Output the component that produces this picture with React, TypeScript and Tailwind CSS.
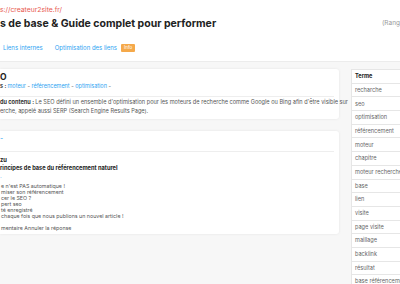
import React from 'react';

const terms = [
  'recharche',
  'seo',
  'optimisation',
  'référencement',
  'moteur',
  'chapitre',
  'moteur recherche',
  'base',
  'lien',
  'visite',
  'page visite',
  'maillage',
  'backlink',
  'résultat',
  'base référencement',
];

const listItems = [
  "e n'est PAS automatique !",
  'miser son référencement',
  'cer le SEO ?',
  'pert seo',
  'té enregistré',
  'chaque fois que nous publions un nouvel article !',
];

const App: React.FC = () => {
  return (
    <div className="w-[400px] h-[284px] overflow-hidden bg-[#f7f7f7] font-['Inter',sans-serif] text-[#555]">
      {/* Header */}
      <div className="h-[62px] bg-white border-b border-[#ececec] pt-[5px]">
        <div className="text-[6.8px] leading-[10px] text-[#e8594f]">s://createur2site.fr/</div>
        <div className="mt-[1px] flex items-center whitespace-nowrap">
          <div className="w-[382px] shrink-0 text-[10.5px] leading-[16px] font-bold text-[#222]">
            s de base &amp; Guide complet pour performer
          </div>
          <div className="text-[6.5px] text-[#999]">(Rang</div>
        </div>
        <div className="mt-[11px] flex items-center pl-[3px] text-[6px] leading-[10px] text-[#2ea3f2] whitespace-nowrap">
          <span>Liens internes</span>
          <span className="ml-[12px]">Optimisation des liens</span>
          <span className="ml-[4px] rounded-[1px] bg-[#f5a94a] px-[3px] text-[4.5px] leading-[8px] text-white">Info</span>
        </div>
      </div>

      <div className="flex gap-[12px] pt-[7px]">
        {/* Left column */}
        <div className="w-[339px] shrink-0 flex flex-col gap-[12px]">
          <div className="bg-white rounded-r-[3px] shadow-[0_0_3px_rgba(0,0,0,0.08)] pt-[4px] pr-[5px] pb-[3px]">
            <div className="text-[8.5px] leading-[9px] font-bold text-[#222]">O</div>
            <div className="text-[5.5px] leading-[8px] whitespace-nowrap">
              <span className="font-bold text-[#333]">s : </span>
              <span className="text-[#2ea3f2]">moteur</span> - <span className="text-[#2ea3f2]">référencement</span> -{' '}
              <span className="text-[#2ea3f2]">optimisation</span> -
            </div>
            <div className="mt-[6px] border-t border-[#eeeeee] pt-[1px] text-[5.6px] leading-[9px]">
              <div className="whitespace-nowrap">
                <span className="font-bold text-[#333]">du contenu : </span>
                Le SEO défini un ensemble d'optimisation pour les moteurs de recherche comme Google ou Bing afin d'être visible sur
              </div>
              <div>erche, appelé aussi SERP (Search Engine Results Page).</div>
            </div>
          </div>

          <div className="bg-white rounded-r-[3px] shadow-[0_0_3px_rgba(0,0,0,0.08)] pt-[4px] pr-[5px] pb-[3px]">
            <div className="text-[7px] leading-[8px] text-[#2ea3f2]">-</div>
            <div className="mt-[8px] border-t border-[#eeeeee] pt-[4px]">
              <div className="text-[5.8px] leading-[8px] font-bold text-[#222]">zu</div>
              <div className="text-[5.7px] leading-[7px] font-bold text-[#222]">rincipes de base du référencement naturel</div>
              <div className="mt-[1px] text-[6px] leading-[7px] text-[#2ea3f2]">.</div>
              <div className="mt-[4px] pl-[1px] text-[5.3px] leading-[6px]">
                {listItems.map((item) => (
                  <div key={item} className="whitespace-nowrap">{item}</div>
                ))}
              </div>
              <div className="mt-[6px] pl-[1px] text-[5.3px] leading-[6px]">mentaire Annuler la réponse</div>
            </div>
          </div>
        </div>

        {/* Terms table */}
        <div className="w-[90px] shrink-0 bg-white border-l border-t border-[#e6e6e6] text-[5.6px] text-[#666]">
          <div className="h-[13.7px] flex items-center pl-[3px] font-bold text-[#222] border-b border-[#e6e6e6]">Terme</div>
          {terms.map((t) => (
            <div key={t} className="h-[13.7px] flex items-center pl-[3px] border-b border-[#e6e6e6] whitespace-nowrap">
              {t}
            </div>
          ))}
        </div>
      </div>
    </div>
  );
};

export default App;
